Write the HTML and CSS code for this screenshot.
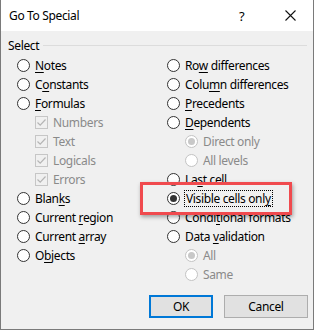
FILE: index.html
```html
<!DOCTYPE html>
<html lang="en">
<head>
  <meta charset="UTF-8" />
  <title>Go To Special</title>
  <link rel="stylesheet" href="styles.css">
</head>
<body>
  <div class="dialog">
    <div class="titlebar">
      <span class="title">Go To Special</span>
      <span class="help">?</span>
      <span class="close">
        <svg width="11" height="11" viewBox="0 0 11 11"><path d="M0.5 0.5 L10.5 10.5 M10.5 0.5 L0.5 10.5" stroke="#111" stroke-width="1.1" fill="none"/></svg>
      </span>
    </div>

    <div class="content">
      <div class="group-head">
        <span>Select</span>
        <div class="rule"></div>
      </div>

      <div class="options">
        <div class="col">
          <div class="opt"><span class="radio"></span><span><u>N</u>otes</span></div>
          <div class="opt"><span class="radio"></span><span>C<u>o</u>nstants</span></div>
          <div class="opt"><span class="radio"></span><span><u>F</u>ormulas</span></div>
          <div class="opt sub off"><span class="check"><svg width="11" height="11" viewBox="0 0 11 11"><path d="M1.5 5.5 L4.2 8.2 L9.5 2.5" stroke="#b5b5b5" stroke-width="1.2" fill="none"/></svg></span><span>Numbers</span></div>
          <div class="opt sub off"><span class="check"><svg width="11" height="11" viewBox="0 0 11 11"><path d="M1.5 5.5 L4.2 8.2 L9.5 2.5" stroke="#b5b5b5" stroke-width="1.2" fill="none"/></svg></span><span>Text</span></div>
          <div class="opt sub off"><span class="check"><svg width="11" height="11" viewBox="0 0 11 11"><path d="M1.5 5.5 L4.2 8.2 L9.5 2.5" stroke="#b5b5b5" stroke-width="1.2" fill="none"/></svg></span><span>Logicals</span></div>
          <div class="opt sub off"><span class="check"><svg width="11" height="11" viewBox="0 0 11 11"><path d="M1.5 5.5 L4.2 8.2 L9.5 2.5" stroke="#b5b5b5" stroke-width="1.2" fill="none"/></svg></span><span>Errors</span></div>
          <div class="opt"><span class="radio"></span><span>Blan<u>k</u>s</span></div>
          <div class="opt"><span class="radio"></span><span>Current <u>r</u>egion</span></div>
          <div class="opt"><span class="radio"></span><span>Current <u>a</u>rray</span></div>
          <div class="opt"><span class="radio"></span><span>O<u>b</u>jects</span></div>
        </div>
        <div class="col">
          <div class="opt"><span class="radio"></span><span>Ro<u>w</u> differences</span></div>
          <div class="opt"><span class="radio"></span><span>Colu<u>m</u>n differences</span></div>
          <div class="opt"><span class="radio"></span><span><u>P</u>recedents</span></div>
          <div class="opt"><span class="radio"></span><span><u>D</u>ependents</span></div>
          <div class="opt rsub off"><span class="radio dot"></span><span>Direct only</span></div>
          <div class="opt rsub off"><span class="radio"></span><span>All levels</span></div>
          <div class="opt"><span class="radio"></span><span>La<u>s</u>t cell</span></div>
          <div class="opt"><span class="radio dot"></span><span class="focus">Visible cells onl<u>y</u></span></div>
          <div class="opt"><span class="radio"></span><span>Condi<u>t</u>ional formats</span></div>
          <div class="opt"><span class="radio"></span><span>Data <u>v</u>alidation</span></div>
          <div class="opt rsub off"><span class="radio dot"></span><span>All</span></div>
          <div class="opt rsub off"><span class="radio"></span><span>Same</span></div>
        </div>
      </div>

      <div class="buttons">
        <button class="btn default">OK</button>
        <button class="btn">Cancel</button>
      </div>
    </div>

    <div class="highlight"></div>
  </div>
</body>
</html>
```

FILE: styles.css
```css
body {
  margin: 0;
  font-family: "Segoe UI", "Noto Sans", sans-serif;
  font-size: 12px;
  letter-spacing: -0.35px;
  color: #000;
}
.dialog {
  position: relative;
  width: 312px;
  height: 329px;
  border: 1px solid #7a7a7a;
  border-top: none;
  background: #f0f0f0;
}
.titlebar {
  height: 31px;
  background: #fff;
  display: flex;
  align-items: center;
  padding-left: 8px;
}
.title {
  flex: 1;
  font-size: 12px;
}
.help {
  width: 46px;
  font-size: 13px;
}
.close {
  width: 28px;
  display: flex;
}
.content {
  padding: 6px 6px 0 7px;
}
.group-head {
  display: flex;
  align-items: center;
  gap: 4px;
  height: 16px;
}
.rule {
  flex: 1;
  height: 1px;
  background: #dcdcdc;
}
.options {
  display: grid;
  grid-template-columns: 150px 1fr;
  padding: 3px 0 0 9px;
}
.col {
  display: flex;
  flex-direction: column;
}
.opt {
  height: 19px;
  display: flex;
  align-items: center;
  gap: 5px;
  white-space: nowrap;
}
.opt u {
  text-decoration-thickness: 1px;
  text-underline-offset: 2px;
}
.off {
  color: #8a8a8a;
}
.sub {
  padding-left: 18px;
  gap: 5px;
}
.rsub {
  padding-left: 18px;
}
.radio {
  width: 11px;
  height: 11px;
  border: 1px solid #333;
  border-radius: 50%;
  background: #fff;
  display: flex;
  align-items: center;
  justify-content: center;
  flex: none;
}
.radio.dot::after {
  content: "";
  width: 7px;
  height: 7px;
  border-radius: 50%;
  background: #333;
}
.off .radio {
  border-color: #c3c3c3;
  background: #fff;
}
.off .radio.dot::after {
  background: #c8c8c8;
}
.check {
  width: 11px;
  height: 11px;
  border: 1px solid #c6c6c6;
  background: #f0f0f0;
  display: flex;
  flex: none;
}
.focus {
  outline: 1px dotted #000;
  padding: 0 1px;
  line-height: 15px;
}
.buttons {
  display: flex;
  justify-content: flex-end;
  gap: 11px;
  padding: 11px 0 0 0;
  margin-right: -1px;
}
.btn {
  font-family: inherit;
  font-size: 12px;
  letter-spacing: inherit;
  width: 84px;
  height: 23px;
  background: #e1e1e1;
  border: 1px solid #adadad;
  padding: 0;
}
.btn.default {
  width: 64px;
  border: 2px solid #0078d7;
}
.highlight {
  position: absolute;
  left: 139px;
  top: 182px;
  width: 146px;
  height: 27px;
  border: 3px solid #f04a4e;
  box-shadow: 1px 2px 4px rgba(0, 0, 0, 0.35);
}
```
